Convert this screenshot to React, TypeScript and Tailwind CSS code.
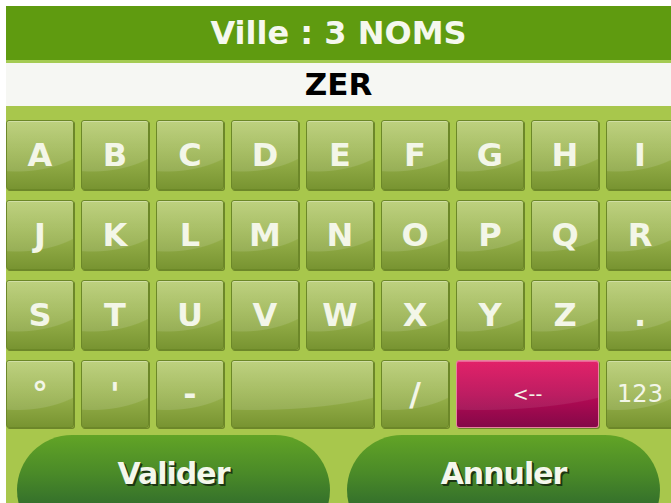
import React from "react";

const font = { fontFamily: '"DejaVu Sans", Verdana, sans-serif' };

type KeyDef = { label: string; span?: number; kind?: "normal" | "red" | "num" | "space" };

const rows: KeyDef[][] = [
  ["A", "B", "C", "D", "E", "F", "G", "H", "I"].map((l) => ({ label: l })),
  ["J", "K", "L", "M", "N", "O", "P", "Q", "R"].map((l) => ({ label: l })),
  ["S", "T", "U", "V", "W", "X", "Y", "Z", "."].map((l) => ({ label: l })),
];

const lastRow: KeyDef[] = [
  { label: "°" },
  { label: "'" },
  { label: "-" },
  { label: "", span: 2, kind: "space" },
  { label: "/" },
  { label: "<--", span: 2, kind: "red" },
  { label: "123", kind: "num" },
];

function Key({ k, h }: { k: KeyDef; h: string }) {
  const isRed = k.kind === "red";
  const base = isRed
    ? "bg-[linear-gradient(to_bottom,#e00f5c,#b80a55_50%,#840848)] border-[#e7849e]"
    : "bg-[linear-gradient(to_bottom,#b5cb6e,#98b24c_50%,#789431)] border-[#6c8828]";
  const gloss = isRed
    ? "bg-[radial-gradient(ellipse_130%_75%_at_15%_0%,rgba(255,255,255,0.08)_98%,rgba(255,255,255,0)_100%)]"
    : "bg-[radial-gradient(ellipse_130%_75%_at_15%_0%,rgba(255,255,255,0.12)_98%,rgba(255,255,255,0)_100%)]";
  let text = "text-[32px] font-bold";
  if (k.kind === "num") text = "text-[24px] font-normal";
  if (k.kind === "red") text = "text-[19px] font-normal";
  return (
    <div
      className={`relative ${h} ${k.span === 2 ? "col-span-2" : ""} ${base} border rounded-[3px] shadow-[inset_0_1px_0_rgba(255,255,255,0.3),1px_1px_0_rgba(70,90,20,0.6)] flex items-center justify-center overflow-hidden`}
    >
      <div className={`absolute inset-0 ${gloss}`} />
      <span className={`relative ${text} text-[#f3f6e8] leading-none`} style={font}>
        {k.label}
      </span>
    </div>
  );
}

function BigButton({ label }: { label: string }) {
  return (
    <div className="w-[313px] h-[110px] rounded-[62px] bg-[linear-gradient(to_bottom,#62a426,#4a8a28_35%,#2f6a2c_70%,#245a2a)] flex justify-center pt-[24px] shrink-0">
      <span
        className="text-[30px] font-bold text-[#f4f7ec] leading-none tracking-[-1px] [text-shadow:2px_2px_0_#1c3612,1px_1px_0_#1c3612]"
        style={font}
      >
        {label}
      </span>
    </div>
  );
}

export default function App() {
  return (
    <div className="w-[671px] h-[503px] overflow-hidden bg-white pt-[6px] pl-[6px]">
      <div className="h-[497px] bg-[#a8c74c] flex flex-col overflow-hidden">
        <div className="h-[54px] bg-[#5f9b10] flex items-center justify-center shrink-0">
          <span className="text-[32px] font-bold text-[#f5f8ee] leading-none" style={font}>
            Ville : 3 NOMS
          </span>
        </div>
        <div className="h-[3px] bg-[#a4cb52] shrink-0" />
        <div className="h-[43px] bg-[#f6f7f3] flex items-center justify-center shrink-0">
          <span className="text-[31px] font-bold text-black leading-none" style={font}>
            ZER
          </span>
        </div>
        <div className="pt-[14px] grid grid-cols-[repeat(9,68px)] gap-x-[7px] gap-y-[10px] shrink-0">
          {rows.map((r) => r.map((k) => <Key key={k.label} k={k} h="h-[70px]" />))}
          {lastRow.map((k, i) => (
            <Key key={"l" + i} k={k} h="h-[68px]" />
          ))}
        </div>
        <div className="mt-[7px] pl-[11px] flex gap-[17px] shrink-0">
          <BigButton label="Valider" />
          <BigButton label="Annuler" />
        </div>
      </div>
    </div>
  );
}
